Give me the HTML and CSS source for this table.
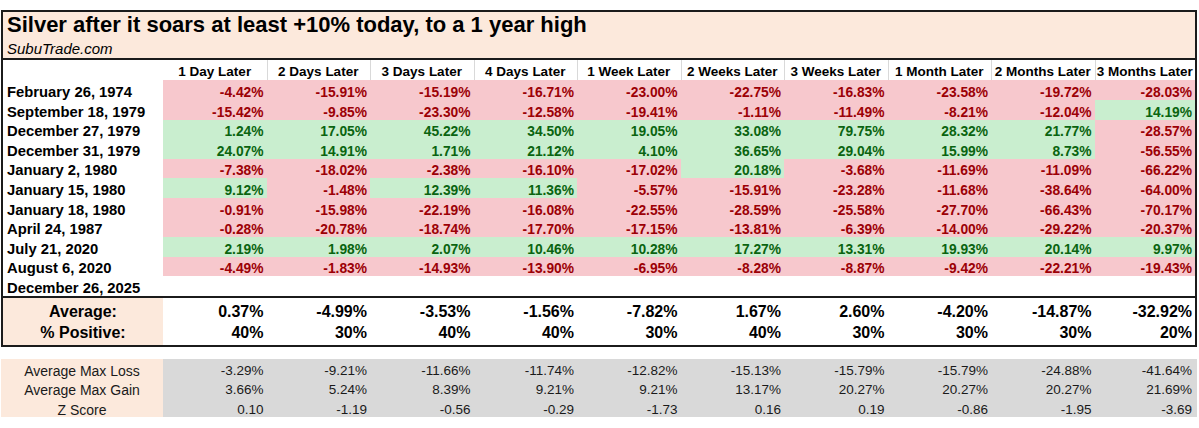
FILE: index.html
```html
<!DOCTYPE html>
<html lang="en">
<head>
<meta charset="utf-8">
<title>Silver after it soars at least +10% today</title>
<link rel="stylesheet" href="styles.css">
</head>
<body>
<div class="sheet">
  <div class="title-block">
    <h1 class="title">Silver after it soars at least +10% today, to a 1 year high</h1>
    <p class="source">SubuTrade.com</p>
  </div>
  <table class="grid results">
    <colgroup><col class="c-label"><col class="c-num"><col class="c-num"><col class="c-num"><col class="c-num"><col class="c-num"><col class="c-num"><col class="c-num"><col class="c-num"><col class="c-num"><col class="c-last"></colgroup>
    <thead>
      <tr class="head"><th></th><th>1 Day Later</th><th>2 Days Later</th><th>3 Days Later</th><th>4 Days Later</th><th>1 Week Later</th><th>2 Weeks Later</th><th>3 Weeks Later</th><th>1 Month Later</th><th>2 Months Later</th><th>3 Months Later</th></tr>
    </thead>
    <tbody>
      <tr class="row"><th>February 26, 1974</th><td class="neg">-4.42%</td><td class="neg">-15.91%</td><td class="neg">-15.19%</td><td class="neg">-16.71%</td><td class="neg">-23.00%</td><td class="neg">-22.75%</td><td class="neg">-16.83%</td><td class="neg">-23.58%</td><td class="neg">-19.72%</td><td class="neg">-28.03%</td></tr>
      <tr class="row"><th>September 18, 1979</th><td class="neg">-15.42%</td><td class="neg">-9.85%</td><td class="neg">-23.30%</td><td class="neg">-12.58%</td><td class="neg">-19.41%</td><td class="neg">-1.11%</td><td class="neg">-11.49%</td><td class="neg">-8.21%</td><td class="neg">-12.04%</td><td class="pos">14.19%</td></tr>
      <tr class="row"><th>December 27, 1979</th><td class="pos">1.24%</td><td class="pos">17.05%</td><td class="pos">45.22%</td><td class="pos">34.50%</td><td class="pos">19.05%</td><td class="pos">33.08%</td><td class="pos">79.75%</td><td class="pos">28.32%</td><td class="pos">21.77%</td><td class="neg">-28.57%</td></tr>
      <tr class="row"><th>December 31, 1979</th><td class="pos">24.07%</td><td class="pos">14.91%</td><td class="pos">1.71%</td><td class="pos">21.12%</td><td class="pos">4.10%</td><td class="pos">36.65%</td><td class="pos">29.04%</td><td class="pos">15.99%</td><td class="pos">8.73%</td><td class="neg">-56.55%</td></tr>
      <tr class="row"><th>January 2, 1980</th><td class="neg">-7.38%</td><td class="neg">-18.02%</td><td class="neg">-2.38%</td><td class="neg">-16.10%</td><td class="neg">-17.02%</td><td class="pos">20.18%</td><td class="neg">-3.68%</td><td class="neg">-11.69%</td><td class="neg">-11.09%</td><td class="neg">-66.22%</td></tr>
      <tr class="row"><th>January 15, 1980</th><td class="pos">9.12%</td><td class="neg">-1.48%</td><td class="pos">12.39%</td><td class="pos">11.36%</td><td class="neg">-5.57%</td><td class="neg">-15.91%</td><td class="neg">-23.28%</td><td class="neg">-11.68%</td><td class="neg">-38.64%</td><td class="neg">-64.00%</td></tr>
      <tr class="row"><th>January 18, 1980</th><td class="neg">-0.91%</td><td class="neg">-15.98%</td><td class="neg">-22.19%</td><td class="neg">-16.08%</td><td class="neg">-22.55%</td><td class="neg">-28.59%</td><td class="neg">-25.58%</td><td class="neg">-27.70%</td><td class="neg">-66.43%</td><td class="neg">-70.17%</td></tr>
      <tr class="row"><th>April 24, 1987</th><td class="neg">-0.28%</td><td class="neg">-20.78%</td><td class="neg">-18.74%</td><td class="neg">-17.70%</td><td class="neg">-17.15%</td><td class="neg">-13.81%</td><td class="neg">-6.39%</td><td class="neg">-14.00%</td><td class="neg">-29.22%</td><td class="neg">-20.37%</td></tr>
      <tr class="row"><th>July 21, 2020</th><td class="pos">2.19%</td><td class="pos">1.98%</td><td class="pos">2.07%</td><td class="pos">10.46%</td><td class="pos">10.28%</td><td class="pos">17.27%</td><td class="pos">13.31%</td><td class="pos">19.93%</td><td class="pos">20.14%</td><td class="pos">9.97%</td></tr>
      <tr class="row"><th>August 6, 2020</th><td class="neg">-4.49%</td><td class="neg">-1.83%</td><td class="neg">-14.93%</td><td class="neg">-13.90%</td><td class="neg">-6.95%</td><td class="neg">-8.28%</td><td class="neg">-8.87%</td><td class="neg">-9.42%</td><td class="neg">-22.21%</td><td class="neg">-19.43%</td></tr>
      <tr class="row"><th>December 26, 2025</th><td></td><td></td><td></td><td></td><td></td><td></td><td></td><td></td><td></td><td></td></tr>
    </tbody>
  </table>
  <table class="grid summary">
    <colgroup><col class="c-label"><col class="c-num"><col class="c-num"><col class="c-num"><col class="c-num"><col class="c-num"><col class="c-num"><col class="c-num"><col class="c-num"><col class="c-num"><col class="c-last"></colgroup>
    <tbody>
      <tr class="avg"><th>Average:</th><td>0.37%</td><td>-4.99%</td><td>-3.53%</td><td>-1.56%</td><td>-7.82%</td><td>1.67%</td><td>2.60%</td><td>-4.20%</td><td>-14.87%</td><td>-32.92%</td></tr>
      <tr class="pct"><th>% Positive:</th><td>40%</td><td>30%</td><td>40%</td><td>40%</td><td>30%</td><td>40%</td><td>30%</td><td>30%</td><td>30%</td><td>20%</td></tr>
    </tbody>
  </table>
</div>
<table class="grid stats">
  <colgroup><col class="s-label"><col class="c-num"><col class="c-num"><col class="c-num"><col class="c-num"><col class="c-num"><col class="c-num"><col class="c-num"><col class="c-num"><col class="c-num"><col class="s-last"></colgroup>
  <tbody>
    <tr><th>Average Max Loss</th><td>-3.29%</td><td>-9.21%</td><td>-11.66%</td><td>-11.74%</td><td>-12.82%</td><td>-15.13%</td><td>-15.79%</td><td>-15.79%</td><td>-24.88%</td><td>-41.64%</td></tr>
    <tr><th>Average Max Gain</th><td>3.66%</td><td>5.24%</td><td>8.39%</td><td>9.21%</td><td>9.21%</td><td>13.17%</td><td>20.27%</td><td>20.27%</td><td>20.27%</td><td>21.69%</td></tr>
    <tr><th>Z Score</th><td>0.10</td><td>-1.19</td><td>-0.56</td><td>-0.29</td><td>-1.73</td><td>0.16</td><td>0.19</td><td>-0.86</td><td>-1.95</td><td>-3.69</td></tr>
  </tbody>
</table>
</body>
</html>
```

FILE: styles.css
```css
html, body {
  margin: 0;
  padding: 0;
  background: #ffffff;
}

body {
  font-family: "Liberation Sans", Arial, sans-serif;
  color: #000;
}

.sheet {
  box-sizing: border-box;
  width: 1196px;
  margin: 10px 0 0 1px;
  border: 2px solid #1b1b1b;
}

.title-block {
  height: 46px;
  padding: 0 0 0 4px;
  background: #fce9dc;
  border-bottom: 2px solid #1b1b1b;
}

.title {
  margin: 0;
  font-size: 22px;
  line-height: 26px;
  font-weight: bold;
}

.source {
  margin: 2px 0 0;
  font-size: 15px;
  line-height: 18px;
  font-style: italic;
}

.grid {
  table-layout: fixed;
  border-collapse: separate;
  border-spacing: 0;
  width: 1192px;
}

.grid th,
.grid td {
  padding: 0;
  vertical-align: bottom;
  white-space: nowrap;
  overflow: visible;
}

.c-label { width: 160px; }
.c-num { width: 103.5px; }
.c-last { width: 100.5px; }

/* header */
.head th {
  height: 20.4px;
  font-size: 13.5px;
  line-height: 16.5px;
  font-weight: bold;
  text-align: center;
  background: #fff;
}

.head th:nth-child(n+3) {
  box-shadow: inset 1px 0 0 #d9d9d9;
}

/* data rows */
.row th,
.row td {
  height: 19.6px;
  line-height: 15px;
}

.row th {
  font-size: 14.8px;
  font-weight: bold;
  text-align: left;
  padding-left: 4px;
}

.row td {
  font-size: 13.8px;
  font-weight: bold;
  text-align: right;
  padding-right: 3px;
}

.neg {
  background: #f7c8cd;
  color: #9c0006;
}

.pos {
  background: #c9eecf;
  color: #0a6410;
}

/* summary rows */
.summary {
  border-top: 2px solid #1b1b1b;
}

.summary th,
.summary td {
  font-size: 16px;
  font-weight: bold;
}

.summary th {
  background: #fce9dc;
  text-align: center;
}

.summary td {
  text-align: right;
  padding-right: 3px;
}

.avg th,
.avg td {
  height: 23px;
  line-height: 19px;
}

.pct th,
.pct td {
  height: 24px;
  line-height: 22.6px;
}

/* stats */
.stats {
  width: 1196px;
  margin: 12px 0 0 1px;
}

.s-label { width: 162px; }
.s-last { width: 102.5px; }

.stats th,
.stats td {
  height: 19.33px;
  line-height: 14.4px;
  font-weight: normal;
  color: #1a1a1a;
}

.stats th {
  font-size: 14px;
  background: #fce9dc;
  text-align: center;
}

.stats td {
  font-size: 13.5px;
  background: #d9d9d9;
  text-align: right;
  padding-right: 3px;
}

.stats td:last-child {
  padding-right: 5px;
}
```
